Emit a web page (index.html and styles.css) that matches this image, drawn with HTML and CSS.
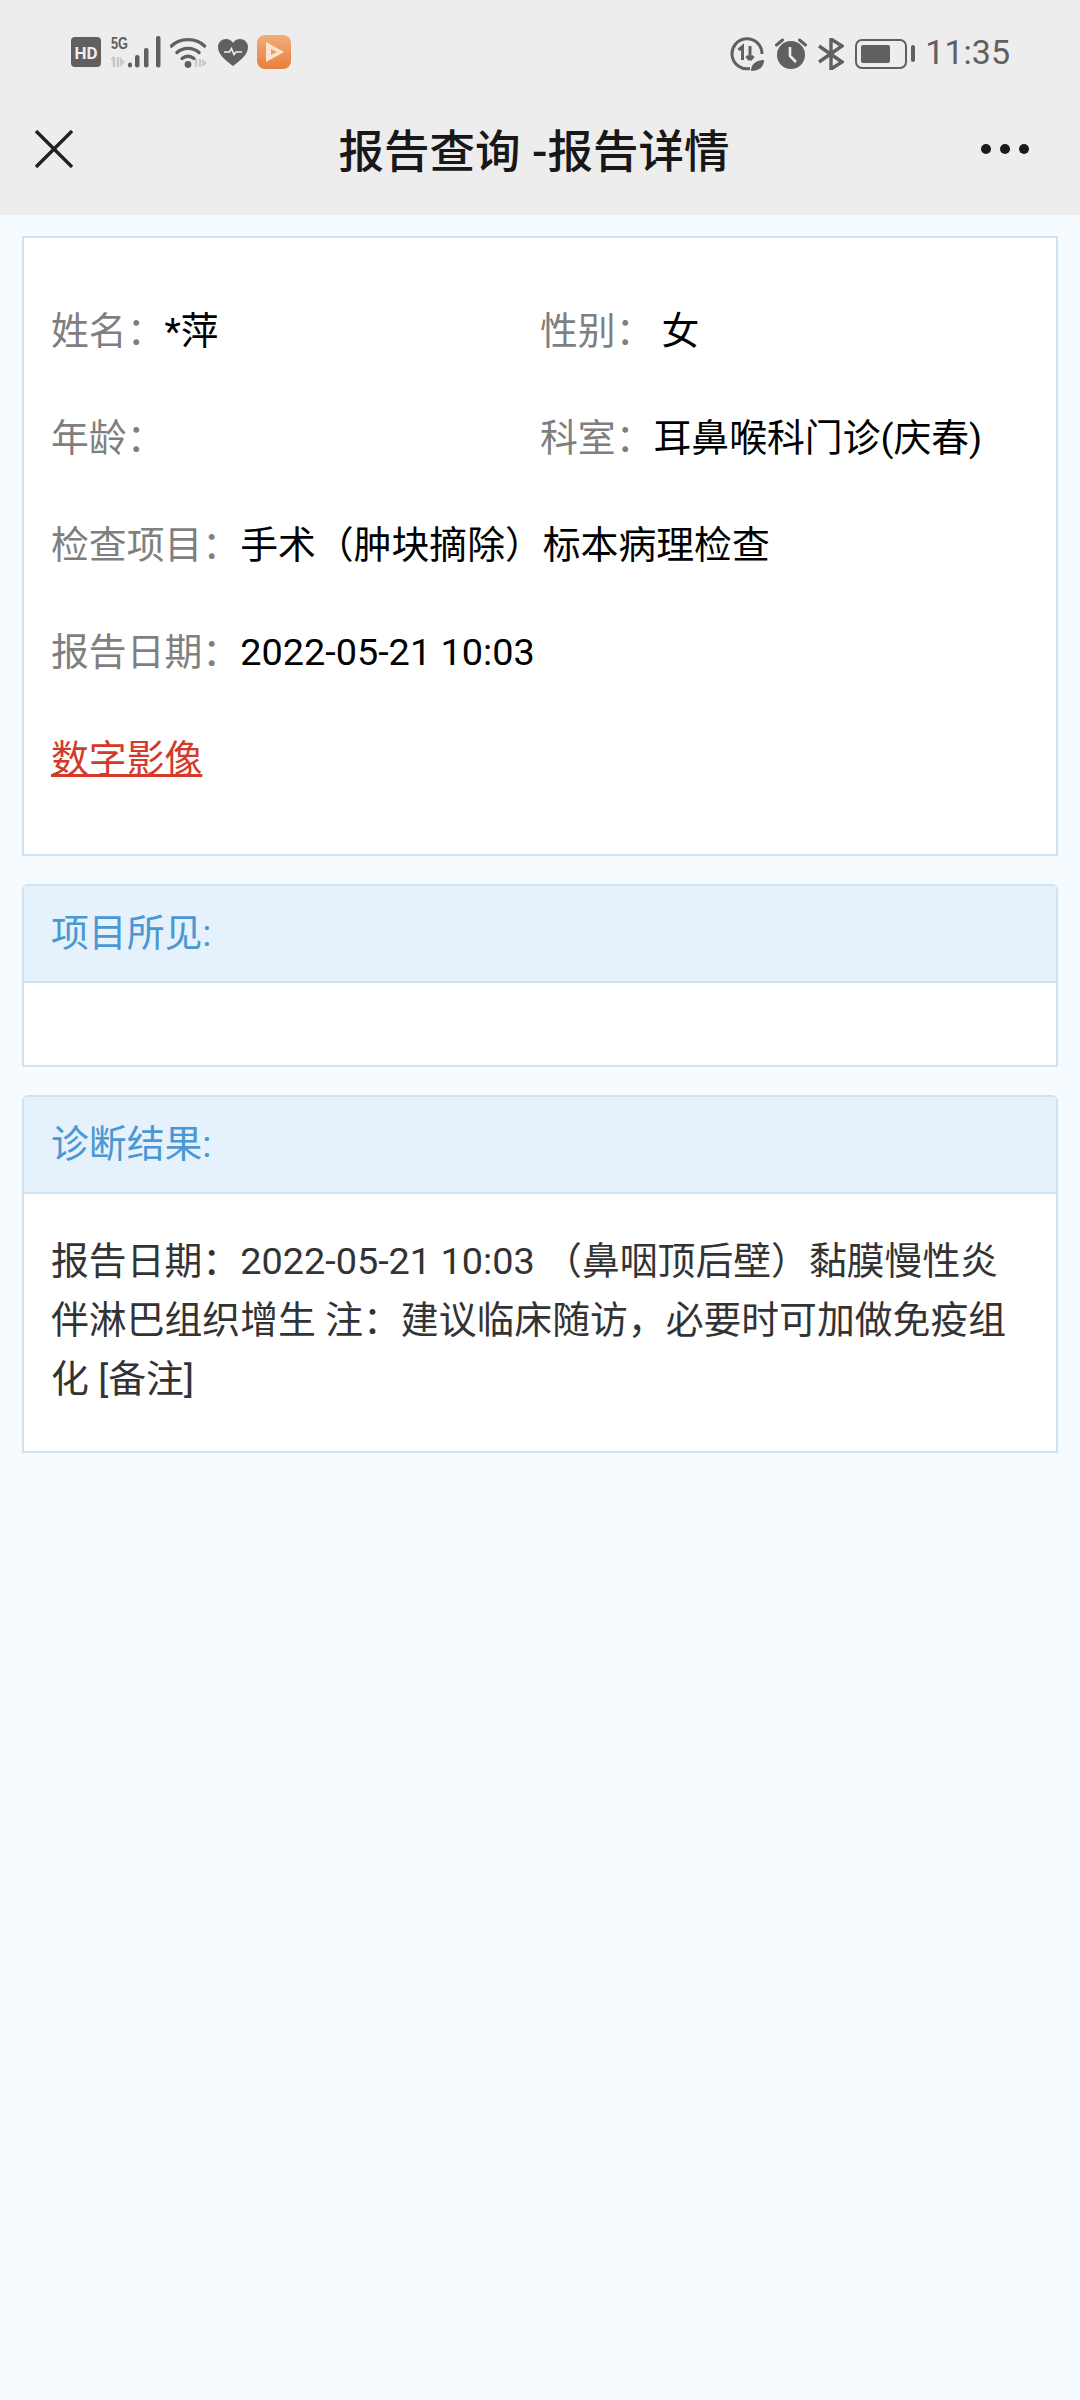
FILE: index.html
```html
<!DOCTYPE html>
<html lang="zh-CN">
<head>
<meta charset="utf-8">
<title>报告查询 -报告详情</title>
<link rel="stylesheet" href="styles.css">
</head>
<body>
<header class="top">
  <div class="status">
    <div class="status-left">
      <svg class="ic" width="30" height="30" viewBox="0 0 30 30"><rect width="30" height="30" rx="4" fill="#606060"/><text x="15" y="21.500" class="hd">HD</text></svg>
      <svg class="ic sig" width="50" height="40" viewBox="0 -4 50 40"><text x="0" y="13" class="fiveg" textLength="17" lengthAdjust="spacingAndGlyphs">5G</text><path d="M3 31v-10M3 21l-2.500 3M7 31v-10" stroke="#c9c9c9" stroke-width="2.400" fill="none"/><path d="M9 21l5 5-5 5z" fill="#c9c9c9"/><g fill="#606060"><rect x="17" y="26.500" width="4" height="5" rx="2"/><rect x="24" y="19" width="4.500" height="12.500" rx="2"/><rect x="33" y="12" width="4.500" height="19.500" rx="2"/><rect x="45" y="0" width="4.500" height="31.500" rx="2"/></g></svg>
      <svg class="ic wifi" width="38" height="32" viewBox="0 0 38 32"><g fill="none" stroke="#606060" stroke-width="3.400" stroke-linecap="round"><path d="M1.500 10C10 1.500 26 1.500 34.500 10"/><path d="M7 16.500C13 11 23 11 29 16.500"/><path d="M12 22.500C15.500 19.500 20.500 19.500 24 22.500"/></g><circle cx="18" cy="28.500" r="3.400" fill="#606060"/><path d="M26 31v-8M30 23v8" stroke="#c9c9c9" stroke-width="2.200"/><path d="M32 23l5 4-5 4z" fill="#c9c9c9"/></svg>
      <svg class="ic heart" width="30" height="27" viewBox="0 0 30 27"><path d="M15 27C7 21 0 15.500 0 8 0 3.500 3.800 0 8 0c3 0 5.500 1.500 7 4 1.500-2.500 4-4 7-4 4.200 0 8 3.500 8 8 0 7.500-7 13-15 19z" fill="#606060"/><path d="M6 13h5.500l2-3.500 2.500 6 2-2.500h6" fill="none" stroke="#eee" stroke-width="1.600"/></svg>
      <svg class="ic app" width="34" height="34" viewBox="0 0 34 34"><defs><linearGradient id="appg" x1="0" y1="0" x2="0" y2="1"><stop offset="0" stop-color="#f2ae78"/><stop offset="1" stop-color="#e77f3d"/></linearGradient></defs><rect width="34" height="34" rx="8" fill="url(#appg)"/><path d="M9 7l18 10L9 27z" fill="#fbe3d2"/><path d="M14 14l6 3-6 3z" fill="#ee9a60"/></svg>
    </div>
    <div class="status-right">
      <svg class="ic" width="34" height="34" viewBox="0 0 34 34"><path d="M20 31.500A15 15 0 1 1 32 17" fill="none" stroke="#606060" stroke-width="3"/><path d="M8.500 13l4-3.500V23M20 9v14M20 23l-3.500-4M20 23l3.500-4" fill="none" stroke="#606060" stroke-width="3"/><path d="M21 34c0-7 5-11 13-11 0 7-5 11-13 11z" fill="#606060"/></svg>
      <svg class="ic" width="32" height="31" viewBox="0 0 32 31"><circle cx="16" cy="17" r="14" fill="#606060"/><path d="M15 9v9l6 6" fill="none" stroke="#eee" stroke-width="2.600"/><path d="M1.500 7l6-5M30.500 7l-6-5" stroke="#606060" stroke-width="3" stroke-linecap="round"/></svg>
      <svg class="ic bt" width="26" height="32" viewBox="0 0 26 32"><path d="M1 8l23 16-11 7V1l11 7L1 24" fill="none" stroke="#606060" stroke-width="3.400"/></svg>
      <div class="battery"><span class="battery-fill"></span></div>
      <span class="battery-cap"></span>
      <span class="time">11:35</span>
    </div>
  </div>
  <div class="nav">
    <svg class="close" width="38" height="38" viewBox="0 0 38 38"><path d="M1 1l36 36M37 1L1 37" stroke="#222" stroke-width="3.400" fill="none"/></svg>
    <h1 class="title">报告查询 -报告详情</h1>
    <div class="more"><i></i><i></i><i></i></div>
  </div>
</header>
<main class="page">
  <section class="card info">
    <div class="row two">
      <div class="field"><span class="label">姓名：</span><span class="value">*萍</span></div>
      <div class="field"><span class="label">性别：</span><span class="value gap">女</span></div>
    </div>
    <div class="row two">
      <div class="field"><span class="label">年龄：</span></div>
      <div class="field"><span class="label">科室：</span><span class="value">耳鼻喉科门诊(庆春)</span></div>
    </div>
    <div class="row"><span class="label">检查项目：</span><span class="value">手术（肿块摘除）标本病理检查</span></div>
    <div class="row"><span class="label">报告日期：</span><span class="value">2022-05-21 10:03</span></div>
    <div class="row"><a class="link" href="#">数字影像</a></div>
  </section>
  <section class="card panel">
    <div class="panel-head">项目所见:</div>
    <div class="panel-body empty"></div>
  </section>
  <section class="card panel">
    <div class="panel-head">诊断结果:</div>
    <div class="panel-body">报告日期：2022-05-21 10:03 （鼻咽顶后壁）黏膜慢性炎伴淋巴组织增生 注：建议临床随访，必要时可加做免疫组化 [备注]</div>
  </section>
</main>
</body>
</html>
```
FILE: styles.css
```css
* { box-sizing: border-box; }
html, body { margin: 0; padding: 0; }
body {
  width: 1080px;
  min-height: 2400px;
  background: #f6fbff;
  font-family: Roboto, "Noto Sans CJK SC", sans-serif;
  font-size: 37.850px;
  color: #333;
}
.top { height: 215px; background: #ededed; }
.status {
  height: 100px;
  padding: 32px 70px 0 71px;
  display: flex;
  justify-content: space-between;
  align-items: flex-start;
}
.status-left, .status-right { display: flex; align-items: center; }
.status-left { gap: 9.500px; }
.status-right { gap: 11px; margin-top: 3px; }
.ic { display: block; flex: none; }
.hd { font: 700 17px Roboto, sans-serif; fill: #eee; text-anchor: middle; }
.fiveg { font: 700 17px "Liberation Sans", sans-serif; fill: #606060; }
.battery {
  width: 52px;
  height: 30px;
  padding: 4px;
  border: 2.500px solid #606060;
  border-radius: 7px;
}
.battery-fill { display: block; width: 29px; height: 100%; background: #606060; border-radius: 2px; }
.battery-cap { width: 4px; height: 17px; margin-left: -7px; background: #606060; border-radius: 2px; }
.time { margin: -3px 0 0 -1px; font-size: 34px; color: #606060; line-height: 40px; }
.nav {
  height: 115px;
  position: relative;
  display: flex;
  align-items: center;
  justify-content: space-between;
  padding: 0 51px 18px 35px;
}
.close { display: block; }
.title {
  position: absolute;
  left: 0;
  right: 12px;
  top: 0;
  margin: 0;
  text-align: center;
  font-size: 45.500px;
  font-weight: 500;
  line-height: 105px;
  color: #181818;
}
.more { display: flex; gap: 9px; }
.more i { width: 10px; height: 10px; border-radius: 50%; background: #1a1a1a; }
.page {
  padding: 21px 22px 0 22px;
  display: flex;
  flex-direction: column;
  gap: 28px;
}
.card { background: #fff; border: 2px solid #cfe3f2; }
.info { height: 620px; padding: 39px 27px 0; }
.row { height: 107px; display: flex; align-items: center; line-height: 54px; }
.two > .field { width: 489px; display: flex; }
.label { color: #7f7f7f; }
.value { color: #000; }
.gap { margin-left: 8px; }
.link { color: #d33a2c; text-decoration: underline; text-decoration-thickness: 3px; }
.panel { border-radius: 6px 6px 0 0; }
.panel-head {
  height: 97px;
  padding: 0 27px 8px;
  display: flex;
  align-items: center;
  background: #e5f1fb;
  border-bottom: 2px solid #cfe3f2;
  color: #4a97d4;
}
.panel-body { padding: 38px 27px 42px; line-height: 59px; color: #333; }
.panel-body.empty { height: 82px; padding: 0; }
```
